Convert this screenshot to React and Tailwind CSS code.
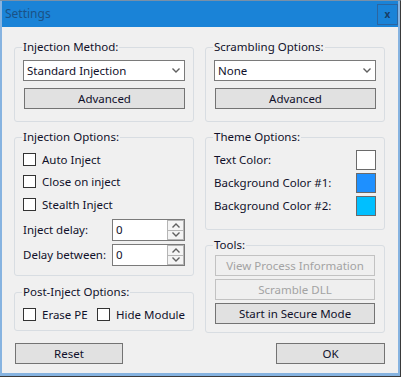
import React from "react";

const font = { fontFamily: '"Noto Sans", "Liberation Sans", sans-serif' };

function Chevron({ up = false, className = "" }) {
  return (
    <svg width="8" height="5" viewBox="0 0 8 5" className={className}>
      <path
        d={up ? "M0.5 4.5 L4 1 L7.5 4.5" : "M0.5 0.5 L4 4 L7.5 0.5"}
        fill="none"
        stroke="#606060"
        strokeWidth="1.4"
      />
    </svg>
  );
}

function Group({ title, className = "", children }) {
  return (
    <fieldset
      className={"border border-[#d8dde2] rounded-[3px] px-[8px] " + className}
    >
      <legend className="-ml-[1px] px-[1px] leading-[16px] text-[11.5px] text-[#10102a]">
        {title}
      </legend>
      {children}
    </fieldset>
  );
}

function Combo({ value }) {
  return (
    <div className="h-[21px] bg-white border border-[#7a7a7a] flex items-center justify-between pl-[3px] pr-[4px] text-[11.5px] text-[#10102a]">
      <span>{value}</span>
      <Chevron />
    </div>
  );
}

function Button({ children, disabled = false, className = "" }) {
  return (
    <div
      className={
        "h-[21px] flex items-center justify-center text-[11.5px] border whitespace-nowrap " +
        (disabled
          ? "bg-[#efefef] border-[#c2c2c2] text-[#a3a3a3] "
          : "bg-[#e1e1e1] border-[#737373] text-[#10102a] ") +
        className
      }
    >
      {children}
    </div>
  );
}

function Check({ label, className = "" }) {
  return (
    <div className={"h-[17px] flex items-center shrink-0 " + className}>
      <div className="w-[13px] h-[13px] shrink-0 bg-white border border-[#333333]" />
      <span className="ml-[6px] text-[11.5px] text-[#10102a] whitespace-nowrap">
        {label}
      </span>
    </div>
  );
}

function Spinner({ label, className = "" }) {
  return (
    <div className={"flex items-center justify-between " + className}>
      <span className="text-[11.5px] text-[#10102a] whitespace-nowrap">{label}</span>
      <div className="w-[73px] h-[22px] bg-white border border-[#7a7a7a] flex">
        <span className="flex-1 pl-[3px] text-[11.5px] leading-[20px] text-[#10102a]">
          0
        </span>
        <div className="w-[17px] flex flex-col">
          <div className="flex-1 border border-[#b5b5b5] bg-[#f4f4f4] flex items-center justify-center">
            <Chevron up />
          </div>
          <div className="flex-1 border border-[#b5b5b5] border-t-0 bg-[#f4f4f4] flex items-center justify-center">
            <Chevron />
          </div>
        </div>
      </div>
    </div>
  );
}

function Swatch({ label, color }) {
  return (
    <div className="flex items-center justify-between h-[20px]">
      <span className="text-[11.5px] text-[#10102a] whitespace-nowrap">{label}</span>
      <div className={"w-[20px] h-[20px] border border-[#6a6a6a] " + color} />
    </div>
  );
}

export default function App() {
  return (
    <div
      style={font}
      className="w-[401px] h-[377px] leading-[16px] bg-[#86b3e0] border-t border-t-[#7890a8] border-r border-r-[#3a3a3a] border-b border-b-[#3a3a3a] pl-[2px] pr-[2px] pb-[3px] flex flex-col"
    >
      <div className="h-[26px] bg-[#1a83d7] flex items-center justify-between pl-[3px] pr-0">
        <span className="text-[12px] text-[#1b5286]">Settings</span>
        <div className="w-[21px] h-[21px] border border-[#2c65a0] flex items-center justify-center text-[10px] font-bold text-[#173e66] leading-none">
          x
        </div>
      </div>
      <div className="flex-1 bg-[#f0f0f0] pt-[12px] pl-[12px] flex gap-[11px]">
        <div className="w-[180px] flex flex-col">
          <Group title="Injection Method:" className="h-[83px]">
            <div className="pt-[5px]">
              <Combo value="Standard Injection" />
              <Button className="mt-[7px] ml-[1px]">Advanced</Button>
            </div>
          </Group>
          <Group title="Injection Options:" className="h-[147px] mt-[7px]">
            <div className="pt-[6px] flex flex-col">
              <Check label="Auto Inject" />
              <Check label="Close on inject" className="mt-[5px]" />
              <Check label="Stealth Inject" className="mt-[6px]" />
              <Spinner label="Inject delay:" className="mt-[6px]" />
              <Spinner label="Delay between:" className="mt-[3px]" />
            </div>
          </Group>
          <Group title="Post-Inject Options:" className="h-[47px] mt-[8px]">
            <div className="pt-[6px] flex">
              <Check label="Erase PE" className="w-[74px]" />
              <Check label="Hide Module" />
            </div>
          </Group>
          <Button className="mt-[12px] ml-[1px] w-[108px]">Reset</Button>
        </div>
        <div className="w-[180px] flex flex-col">
          <Group title="Scrambling Options:" className="h-[83px]">
            <div className="pt-[5px]">
              <Combo value="None" />
              <Button className="mt-[7px] ml-[1px]">Advanced</Button>
            </div>
          </Group>
          <Group title="Theme Options:" className="h-[101px] mt-[7px]">
            <div className="pt-[5px] flex flex-col gap-[3px]">
              <Swatch label="Text Color:" color="bg-white" />
              <Swatch label="Background Color #1:" color="bg-[#1e90ff]" />
              <Swatch label="Background Color #2:" color="bg-[#00bfff]" />
            </div>
          </Group>
          <Group title="Tools:" className="h-[96px] mt-[7px]">
            <div className="pt-[2px] pl-[1px] pr-[1px] flex flex-col gap-[3px]">
              <Button disabled>View Process Information</Button>
              <Button disabled>Scramble DLL</Button>
              <Button>Start in Secure Mode</Button>
            </div>
          </Group>
          <Button className="mt-[10px] ml-[71px] w-[109px]">OK</Button>
        </div>
      </div>
    </div>
  );
}
